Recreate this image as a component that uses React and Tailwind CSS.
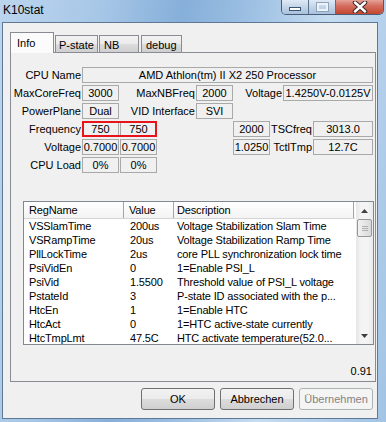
import React from 'react';

const rows = [
  ['VSSlamTime', '200us', 'Voltage Stabilization Slam Time'],
  ['VSRampTime', '20us', 'Voltage Stabilization Ramp Time'],
  ['PllLockTime', '2us', 'core PLL synchronization lock time'],
  ['PsiVidEn', '0', '1=Enable PSI_L'],
  ['PsiVid', '1.5500', 'Threshold value of PSI_L voltage'],
  ['PstateId', '3', 'P-state ID associated with the p...'],
  ['HtcEn', '1', '1=Enable HTC'],
  ['HtcAct', '0', '1=HTC active-state currently'],
  ['HtcTmpLmt', '47.5C', 'HTC activate temperature(52.0...'],
];

const Label = ({ w, children }) => (
  <div className={`${w} h-4 flex items-center justify-end pr-px whitespace-nowrap`}>{children}</div>
);

const Field = ({ w, children }) => (
  <div className={`${w} h-4 border border-[#a9a9a9] flex items-center justify-center whitespace-nowrap overflow-hidden`}>
    {children}
  </div>
);

const Btn = ({ children, disabled }) => (
  <div
    className={`w-[74px] h-[22px] rounded-[3px] border flex items-center justify-center ${
      disabled
        ? 'border-[#adb2b5] bg-[#f4f4f4] text-[#838383]'
        : 'border-[#707070] bg-[linear-gradient(180deg,#f2f2f2_0%,#ebebeb_49%,#dddddd_50%,#cfcfcf_100%)]'
    }`}
  >
    {children}
  </div>
);

export default function App() {
  return (
    <div className="w-[386px] h-[422px] overflow-hidden flex flex-col font-['Liberation_Sans',Arial,sans-serif] text-[11px] text-black bg-[linear-gradient(100deg,#bcd5ee_0%,#a7c7e7_22%,#86afd9_40%,#9dc0e3_55%,#c6dcf0_72%,#b0cdea_88%,#a2c4e5_100%)]">
      {/* title bar */}
      <div className="h-[22px] shrink-0 flex justify-between">
        <div className="pl-[3px] pt-[3px] text-[12px] leading-[14px]">K10stat</div>
        <div className="flex h-[16px] -mt-px mr-[2px] rounded-b-[5px] border border-t-0 border-[#4a5d78] overflow-hidden">
          <div className="w-[27px] border-r border-[#5a6f8c] bg-[linear-gradient(180deg,#e3ecf6,#c5d6e9_50%,#a9c1dc)] flex items-center justify-center">
            <div className="w-[12px] h-[4px] mt-[4px] bg-white border border-[#3b5474]" />
          </div>
          <div className="w-[27px] border-r border-[#5a6f8c] bg-[linear-gradient(180deg,#e3ecf6,#c5d6e9_50%,#a9c1dc)] flex items-center justify-center">
            <div className="w-[11px] h-[8px] border-2 border-[#eef3f9] outline outline-1 outline-[#8ea3bd]" />
          </div>
          <div className="w-[47px] bg-[linear-gradient(180deg,#e9aca3,#d46e61_45%,#c4452f_100%)] flex items-center justify-center">
            <svg width="16" height="12" viewBox="0 0 16 12">
              <path d="M3 1.5 L13 10.5 M13 1.5 L3 10.5" stroke="#3a2a2a" strokeWidth="4.5" strokeLinecap="round" />
              <path d="M3 1.5 L13 10.5 M13 1.5 L3 10.5" stroke="#fff" strokeWidth="2.5" strokeLinecap="round" />
            </svg>
          </div>
        </div>
      </div>

      {/* client area */}
      <div className="flex pl-[2px]">
        <div className="w-[376px] h-[397px] border border-[#5f7894] bg-[#f0f0f0] flex flex-col pt-[9px]">
          {/* tabs */}
          <div className="h-5 flex items-end pl-[7px]">
            <div className="relative z-10 w-[44px] h-[21px] -mb-px bg-[#fbfbfb] border border-b-0 border-[#898c95] pl-[6px] pt-[2px]">Info</div>
            <div className="w-[43px] h-[17px] ml-px bg-[linear-gradient(180deg,#f2f2f2,#ebebeb_50%,#dddddd_51%,#cfcfcf)] border border-b-0 border-[#898c95] pl-[3px] pt-[1px]">P-state</div>
            <div className="w-[40px] h-[17px] ml-px bg-[linear-gradient(180deg,#f2f2f2,#ebebeb_50%,#dddddd_51%,#cfcfcf)] border border-b-0 border-[#898c95] pl-[4px] pt-[1px]">NB</div>
            <div className="w-[41px] h-[17px] ml-[2px] bg-[linear-gradient(180deg,#f2f2f2,#ebebeb_50%,#dddddd_51%,#cfcfcf)] border border-b-0 border-[#898c95] pl-[4px] pt-[1px]">debug</div>
          </div>

          {/* tab panel */}
          <div className="ml-[7px] w-[366px] h-[330px] border border-[#898c95] bg-[#f0f0f0] flex flex-col pt-[14px]">
            <div className="flex flex-col gap-[2px]">
              <div className="flex">
                <Label w="w-[71px]">CPU Name</Label>
                <Field w="w-[291px]">AMD Athlon(tm) II X2 250 Processor</Field>
              </div>
              <div className="flex">
                <Label w="w-[71px]">MaxCoreFreq</Label>
                <Field w="w-[37px]">3000</Field>
                <Label w="w-[77px]">MaxNBFreq</Label>
                <Field w="w-[37px]">2000</Field>
                <Label w="w-[50px]">Voltage</Label>
                <Field w="w-[90px]">1.4250V-0.0125V</Field>
              </div>
              <div className="flex">
                <Label w="w-[71px]">PowerPlane</Label>
                <Field w="w-[37px]">Dual</Field>
                <Label w="w-[77px]">VID Interface</Label>
                <Field w="w-[37px]">SVI</Field>
              </div>
              <div className="flex">
                <Label w="w-[71px]">Frequency</Label>
                <div className="relative flex gap-px">
                  <Field w="w-[37px]">750</Field>
                  <Field w="w-[37px]">750</Field>
                  <div className="absolute inset-0 border-2 border-[#e8141c]" />
                </div>
                <div className="w-[76px]" />
                <Field w="w-[37px]">2000</Field>
                <Label w="w-[43px]">TSCfreq</Label>
                <Field w="w-[60px]">3013.0</Field>
              </div>
              <div className="flex">
                <Label w="w-[71px]">Voltage</Label>
                <div className="flex gap-px">
                  <Field w="w-[37px]">0.7000</Field>
                  <Field w="w-[37px]">0.7000</Field>
                </div>
                <div className="w-[76px]" />
                <Field w="w-[37px]">1.0250</Field>
                <Label w="w-[43px]">TctlTmp</Label>
                <Field w="w-[60px]">12.7C</Field>
              </div>
              <div className="flex">
                <Label w="w-[71px]">CPU Load</Label>
                <div className="flex gap-px">
                  <Field w="w-[37px]">0%</Field>
                  <Field w="w-[37px]">0%</Field>
                </div>
              </div>
            </div>

            {/* register list */}
            <div className="mt-[28px] ml-[12px] w-[351px] h-[144px] border border-[#828790] bg-white flex overflow-hidden">
              <div className="w-[332px] flex flex-col tracking-[-0.15px]">
                <div className="h-[17px] shrink-0 flex bg-[linear-gradient(180deg,#ffffff,#f3f3f3)] border-b border-[#d5d5d5]">
                  <div className="w-[100px] pl-[5px] flex items-center border-r border-[#a5a5a5]">RegName</div>
                  <div className="w-[50px] pl-[5px] flex items-center border-r border-[#a5a5a5]">Value</div>
                  <div className="w-[180px] pl-[3px] flex items-center border-r border-[#a5a5a5]">Description</div>
                </div>
                {rows.map(([name, val, desc]) => (
                  <div key={name} className="h-[14px] shrink-0 flex items-center">
                    <div className="w-[100px] pl-[5px] whitespace-nowrap">{name}</div>
                    <div className="w-[50px] pl-[6px] whitespace-nowrap">{val}</div>
                    <div className="w-[180px] pl-[3px] whitespace-nowrap overflow-hidden">{desc}</div>
                  </div>
                ))}
              </div>
              <div className="w-[17px] ml-[1px] h-full flex flex-col bg-[linear-gradient(90deg,#e6e6e6,#f4f4f4_30%,#f4f4f4_70%,#e9e9e9)]">
                <div className="h-[17px] flex items-center justify-center">
                  <svg width="7" height="4" viewBox="0 0 7 4"><path d="M0 4 L3.5 0 L7 4 Z" fill="#404040" /></svg>
                </div>
                <div className="h-[18px] mx-[1px] rounded-[2px] border border-[#979797] bg-[linear-gradient(90deg,#f2f2f2,#e6e6e6_50%,#d8d8d8)] flex flex-col items-center justify-center gap-[1px]">
                  <div className="w-[6px] h-px bg-[#b0b0b0]" />
                  <div className="w-[6px] h-px bg-[#b0b0b0]" />
                  <div className="w-[6px] h-px bg-[#b0b0b0]" />
                </div>
                <div className="flex-1" />
                <div className="h-[17px] flex items-center justify-center">
                  <svg width="7" height="4" viewBox="0 0 7 4"><path d="M0 0 L7 0 L3.5 4 Z" fill="#404040" /></svg>
                </div>
              </div>
            </div>

            <div className="mt-[20px] pr-[3px] text-right leading-[13px]">0.91</div>
          </div>

          {/* buttons */}
          <div className="mt-[6px] flex justify-end gap-[5px] pr-[4px]">
            <Btn>OK</Btn>
            <Btn>Abbrechen</Btn>
            <Btn disabled>Übernehmen</Btn>
          </div>
        </div>
      </div>
    </div>
  );
}
